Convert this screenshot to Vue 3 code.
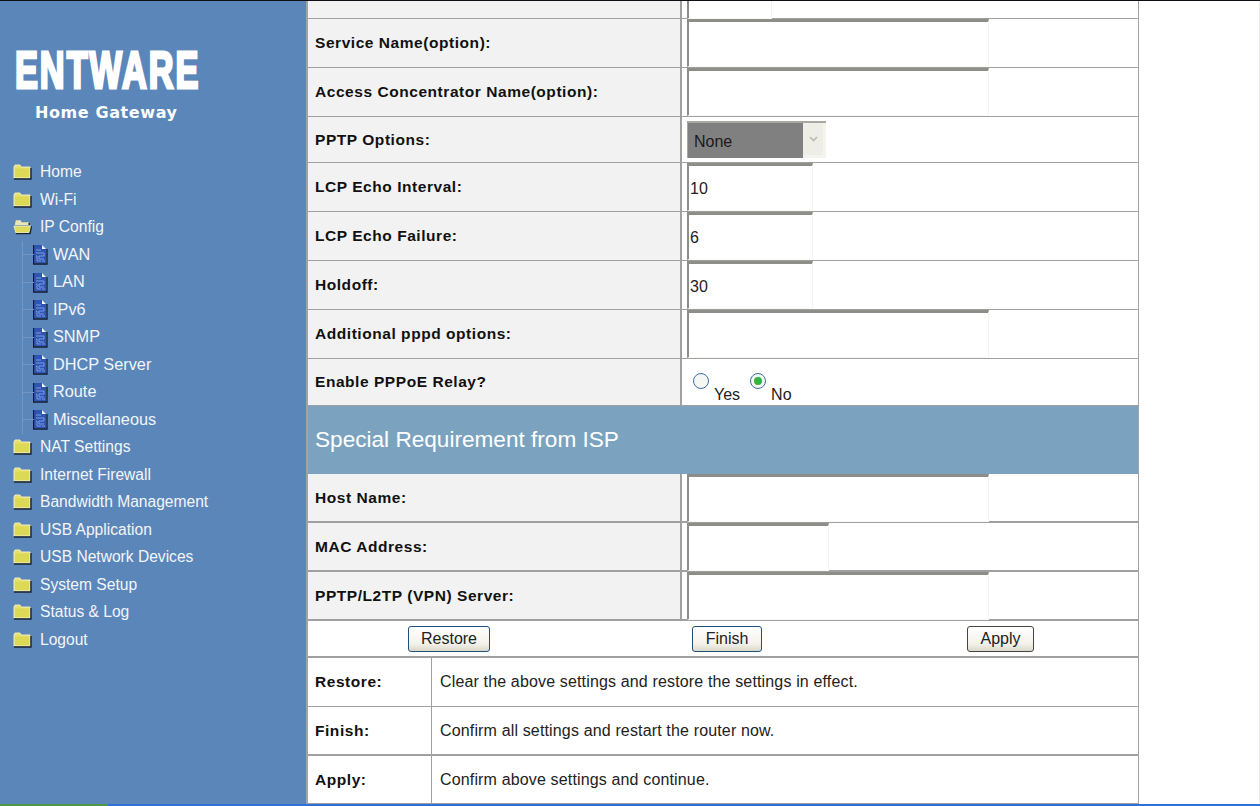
<script setup>
const topRows = [
  { label: 'Service Name(option):', kind: 'wide', value: '' },
  { label: 'Access Concentrator Name(option):', kind: 'wide', value: '' },
  { label: 'PPTP Options:', kind: 'select', short: true },
  { label: 'LCP Echo Interval:', kind: 'small', value: '10' },
  { label: 'LCP Echo Failure:', kind: 'small', value: '6' },
  { label: 'Holdoff:', kind: 'small', value: '30' },
  { label: 'Additional pppd options:', kind: 'wide', value: '' },
]
const ispRows = [
  { label: 'Host Name:', cls: 'wide' },
  { label: 'MAC Address:', cls: 'mac' },
  { label: 'PPTP/L2TP (VPN) Server:', cls: 'wide' },
]
const menu = [
  { t: 'Home', k: 'folder' },
  { t: 'Wi-Fi', k: 'folder' },
  { t: 'IP Config', k: 'open' },
  { t: 'WAN', k: 'doc' },
  { t: 'LAN', k: 'doc' },
  { t: 'IPv6', k: 'doc' },
  { t: 'SNMP', k: 'doc' },
  { t: 'DHCP Server', k: 'doc' },
  { t: 'Route', k: 'doc' },
  { t: 'Miscellaneous', k: 'doc' },
  { t: 'NAT Settings', k: 'folder' },
  { t: 'Internet Firewall', k: 'folder' },
  { t: 'Bandwidth Management', k: 'folder' },
  { t: 'USB Application', k: 'folder' },
  { t: 'USB Network Devices', k: 'folder' },
  { t: 'System Setup', k: 'folder' },
  { t: 'Status & Log', k: 'folder' },
  { t: 'Logout', k: 'folder' },
]
const help = [
  { k: 'Restore:', d: 'Clear the above settings and restore the settings in effect.' },
  { k: 'Finish:', d: 'Confirm all settings and restart the router now.' },
  { k: 'Apply:', d: 'Confirm above settings and continue.' },
]
</script>

<template>
  <div class="screen">
    <div class="page">
      <aside class="side">
        <div class="logo">ENTWARE</div>
        <div class="sub">Home Gateway</div>
        <ul class="menu">
          <li v-for="m in menu" :key="m.t" class="item" :class="{ child: m.k === 'doc' }">
            <span v-if="m.k === 'doc'" class="stem"></span>
            <svg v-if="m.k === 'folder'" class="ic" width="19" height="16" viewBox="0 0 19 16">
              <path d="M1 3 L2 1 H7 L8 3 H17 V14 H1 Z" fill="#e9e26a" stroke="#eceac0" stroke-width="1" />
              <path d="M2 4.5 H16 V13 H2 Z" fill="#dcd954" />
              <path d="M1 15 H18 V4" fill="none" stroke="#1d2430" stroke-width="1.4" />
            </svg>
            <svg v-else-if="m.k === 'open'" class="ic" width="19" height="16" viewBox="0 0 20 16">
              <path d="M2 5 L3 1 H8 L9 3 H17 V6 H2 Z" fill="#e8e6b4" />
              <path d="M1 7 H19 L16.5 14 H3 Z" fill="#dedb58" stroke="#eceac0" stroke-width="1" />
              <path d="M3 15 H18 L19.5 7 M17 3.5 V6" fill="none" stroke="#1d2430" stroke-width="1.4" />
            </svg>
            <svg v-else class="ic doc" width="15" height="21" viewBox="0 0 15 21">
              <path d="M1 1 H9 L13 5 V19 H1 Z" fill="#2f55b4" />
              <path d="M9 1 L13 5 H9 Z" fill="#ffffff" />
              <path d="M3 6 H8 M3 9 H11 V12 H6 V15 H11 M3 12 H4 V17 H8 M9 17 H12" fill="none" stroke="#7e9be0" stroke-width="1" />
              <path d="M0.5 1 V20 H14 V5" fill="none" stroke="#121a33" stroke-width="1.3" />
            </svg>
            <span class="label">{{ m.t }}</span>
          </li>
        </ul>
      </aside>

      <main class="main">
        <div class="row r-top">
          <div class="lab"></div>
          <div class="val"><input class="field cut" type="text" /></div>
        </div>
        <div v-for="r in topRows" :key="r.label" class="row" :class="{ 'r-short': r.short }">
          <div class="lab">{{ r.label }}</div>
          <div class="val">
            <div v-if="r.kind === 'select'" class="selectbox">
              <span class="sel-text">None</span>
              <span class="sel-arrow">
                <svg width="9" height="6" viewBox="0 0 9 6"><path d="M1 1 L4.5 4.5 L8 1" fill="none" stroke="#b9b9ad" stroke-width="1.6" /></svg>
              </span>
            </div>
            <input v-else class="field" :class="r.kind" type="text" :value="r.value" />
          </div>
        </div>
        <div class="row r-radio">
          <div class="lab">Enable PPPoE Relay?</div>
          <div class="val radios">
            <span class="radio"></span><span class="rtext">Yes</span>
            <span class="radio on"></span><span class="rtext">No</span>
          </div>
        </div>
        <h2 class="band">Special Requirement from ISP</h2>
        <div v-for="r in ispRows" :key="r.label" class="row thick">
          <div class="lab">{{ r.label }}</div>
          <div class="val"><input class="field" :class="r.cls" type="text" /></div>
        </div>
        <div class="buttons">
          <button class="btn blue b1" type="button">Restore</button>
          <button class="btn blue b2" type="button">Finish</button>
          <button class="btn b3" type="button">Apply</button>
        </div>
        <div v-for="(h, i) in help" :key="h.k" class="help" :class="'h' + i">
          <div class="hk">{{ h.k }}</div>
          <div class="hd">{{ h.d }}</div>
        </div>
      </main>
      <div class="rest"></div>
    </div>
    <div class="taskbar"><span class="start"></span></div>
  </div>
</template>

<style>
html, body { margin: 0; padding: 0; background: #fff; overflow: hidden; }
</style>

<style scoped>
.screen {
  width: 1260px;
  height: 806px;
  display: flex;
  flex-direction: column;
  overflow: hidden;
  font-family: "Liberation Sans", Arial, sans-serif;
  background: #fff;
}
.page {
  flex: 1;
  min-height: 0;
  display: flex;
  border-top: 1px solid #0c0f14;
}
.side {
  width: 306px;
  flex: none;
  background: #5b86b9;
  color: #fff;
  padding-top: 41px;
  box-sizing: border-box;
}
.logo {
  font: bold 52px/56px "Liberation Sans", sans-serif;
  -webkit-text-stroke: 3px #fff;
  transform: scaleX(0.66);
  transform-origin: 0 0;
  margin-left: 15px;
  white-space: nowrap;
  height: 56px;
  letter-spacing: 3px;
}
.sub {
  font: bold 16px/20px "DejaVu Sans", sans-serif;
  margin: 5px 0 0 35px;
  letter-spacing: 0.6px;
  white-space: nowrap;
}
.menu {
  list-style: none;
  margin: 35.5px 0 0;
  padding: 0;
}
.item {
  position: relative;
  height: 27.5px;
  display: flex;
  align-items: center;
  padding-left: 13px;
  font-size: 15.6px;
  color: #f2f5fa;
  white-space: nowrap;
}
.item.child { padding-left: 33px; font-size: 16.3px; }
.item.child .label { padding-bottom: 1px; }
.ic { flex: none; margin-right: 8px; }
.item.child .ic { margin-right: 5px; }
.stem {
  position: absolute;
  left: 22px;
  top: 0;
  bottom: 0;
  width: 11px;
  border-left: 1px solid #7496c0;
  background: linear-gradient(#7496c0, #7496c0) 0 50% / 100% 1px no-repeat;
}
.main {
  width: 833px;
  flex: none;
  box-sizing: border-box;
  border-left: 2px solid #a3a3a3;
  border-right: 1px solid #a3a3a3;
  height: 803px;
  overflow: hidden;
}
.rest { flex: 1; border-right: 1px solid #ecece4; }
.row {
  display: flex;
  height: 49px;
  box-sizing: border-box;
  border-bottom: 1px solid #a0a0a0;
}
.r-top { height: 18px; }
.r-short { height: 46px; }
.r-radio { height: 46px; border-bottom: 0; }
.row.thick { border-bottom: 2px solid #a0a0a0; }
.lab {
  width: 374px;
  flex: none;
  box-sizing: border-box;
  background: #f2f2f2;
  border-right: 2px solid #a0a0a0;
  padding: 0 0 0 7px;
  display: flex;
  align-items: center;
  font-weight: bold;
  font-size: 15.5px;
  letter-spacing: 0.55px;
  color: #111;
  white-space: nowrap;
}
.val {
  flex: 1;
  display: flex;
  align-items: flex-start;
  padding-left: 5px;
  min-width: 0;
}
.field {
  box-sizing: border-box;
  height: 48px;
  border: 0;
  border-top: 3px solid #8e8e88;
  border-left: 2px solid #8e8e88;
  border-right: 1px solid #f4f4f0;
  border-bottom: 1px solid #f8f8f4;
  background: #fff;
  padding: 1px 0 0 1px;
  font: 16px "Liberation Sans", sans-serif;
  color: #222;
  outline: 0;
}
.field.wide { width: 302px; }
.field.small { width: 126px; }
.field.mac { width: 142px; }
.field.cut { width: 85px; height: 18px; border-top: 0; }
.selectbox {
  margin-top: 4px;
  width: 139px;
  height: 37px;
  box-sizing: border-box;
  display: flex;
  border-top: 2px solid #a8a8a0;
  border-left: 1px solid #a8a8a0;
  background: #f4f4ee;
}
.sel-text {
  width: 115px;
  background: #808080;
  color: #1a1a1a;
  font-size: 16px;
  line-height: 37px;
  padding-left: 6px;
  box-sizing: border-box;
}
.sel-arrow {
  width: 20px;
  height: 32px;
  background: #eeeee6;
  display: flex;
  align-items: center;
  justify-content: center;
}
.radios { padding-left: 11px; align-items: flex-start; font-size: 16px; color: #222; }
.radio {
  width: 14px;
  height: 14px;
  margin-top: 14px;
  border: 1.5px solid #3b6ea5;
  border-radius: 50%;
  background: #f6f6f2;
  position: relative;
  flex: none;
}
.radio.on::after {
  content: "";
  position: absolute;
  left: 3px;
  top: 3px;
  width: 8px;
  height: 8px;
  border-radius: 50%;
  background: #32b43c;
}
.rtext { margin: 27px 10px 0 5px; line-height: 18px; }
.band {
  margin: 0;
  height: 69px;
  box-sizing: border-box;
  background: #7ba3bf;
  border-top: 1px solid #a0a0a0;
  color: #fff;
  font-weight: normal;
  font-size: 22.6px;
  line-height: 68px;
  padding-left: 7px;
}
.buttons {
  height: 37px;
  display: flex;
  box-sizing: border-box;
  border-bottom: 2px solid #a0a0a0;
}
.btn {
  margin-top: 5px;
  height: 26px;
  box-sizing: border-box;
  border-radius: 3px;
  border: 1px solid #1f4f80;
  background: linear-gradient(#ffffff, #f3f2ea 70%, #dcd8c8);
  font: 16px "Liberation Sans", sans-serif;
  color: #222;
  padding: 0;
}
.btn.b1 { margin-left: 100px; width: 82px; }
.btn.b2 { margin-left: 202px; width: 70px; }
.btn.b3 { margin-left: 205px; width: 67px; border-color: #444; }
.help {
  display: flex;
  height: 49px;
  box-sizing: border-box;
  font-size: 16px;
  border-bottom: 1px solid #a0a0a0;
}
.h1 { border-bottom-width: 2px; }
.h2 { height: 48px; }
.hk {
  width: 124px;
  flex: none;
  box-sizing: border-box;
  border-right: 1px solid #a0a0a0;
  padding-left: 7px;
  display: flex;
  align-items: center;
  font-weight: bold;
  font-size: 15.5px;
  letter-spacing: 0.55px;
  color: #111;
}
.hd {
  padding-left: 8px;
  display: flex;
  align-items: center;
  color: #222;
  white-space: nowrap;
  letter-spacing: 0.15px;
}
.taskbar {
  height: 2px;
  flex: none;
  background: #2f6fd8;
  display: flex;
}
.start { width: 108px; background: #4d9a46; }
</style>
